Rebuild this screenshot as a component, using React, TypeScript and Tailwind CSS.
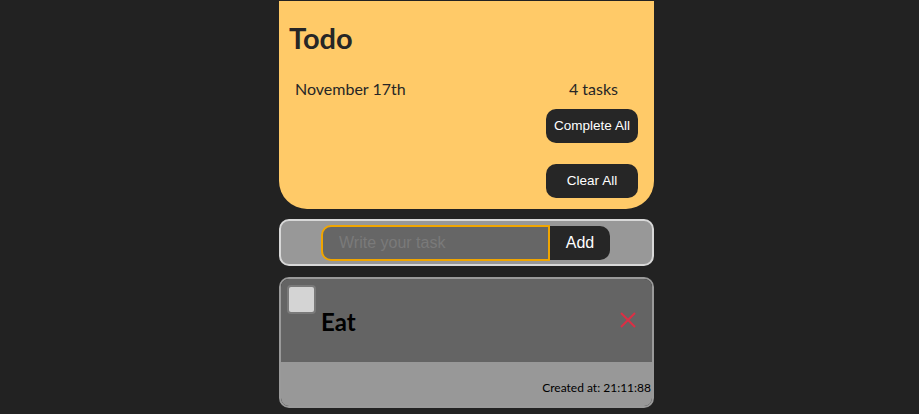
import React from "react";

const App = () => {
  return (
    <div className="min-h-screen bg-[#222222] flex justify-center pl-[14px] font-['Lato',sans-serif]">
      <div className="w-[375px] flex flex-col">
        <div className="mt-px h-[208px] bg-[#ffca68] rounded-b-[28px] pt-[22px] px-[10px] flex flex-col">
          <h1 className="text-[29px] leading-[30px] font-bold text-[#262626]">Todo</h1>
          <div className="flex justify-between items-center mt-[24px] pl-[6px] pr-[26px]">
            <span className="text-[16px] text-[#262626]">November 17th</span>
            <span className="text-[16px] text-[#262626]">4 tasks</span>
          </div>
          <div className="flex flex-col items-end gap-[21px] mt-[8px] pr-[6px]">
            <button className="w-[92px] h-[34px] rounded-[10px] bg-[#262626] text-white text-[13.5px] font-['Liberation_Sans',sans-serif]">
              Complete All
            </button>
            <button className="w-[92px] h-[34px] rounded-[10px] bg-[#262626] text-white text-[13.5px] font-['Liberation_Sans',sans-serif]">
              Clear All
            </button>
          </div>
        </div>

        <div className="mt-[10px] h-[47px] bg-[#989898] border-2 border-[#d8d8d8] rounded-[10px] flex items-center pl-[40px]">
          <input
            placeholder="Write your task"
            className="w-[229px] h-[36px] bg-[#666666] border-2 border-[#f0a500] rounded-l-[10px] px-[16px] text-[16px] text-white placeholder:text-[#7a7a7a] outline-none font-['Liberation_Sans',sans-serif]"
          />
          <button className="w-[60px] h-[34px] bg-[#262626] rounded-r-[10px] text-white text-[16px] font-['Liberation_Sans',sans-serif]">
            Add
          </button>
        </div>

        <div className="mt-[11px] h-[131px] border-2 border-[#9a9a9a] rounded-[10px] overflow-hidden flex flex-col">
          <div className="h-[83px] bg-[#646464] relative flex items-center justify-between pl-[40px] pr-[16px]">
            <div className="absolute left-[6px] top-[6px] w-[29px] h-[29px] bg-[#d4d4d4] border-2 border-[#7a7a7a] rounded-[4px]" />
            <span className="text-[24px] font-bold text-black mt-[3px]">Eat</span>
            <svg width="18" height="18" viewBox="0 0 18 18" className="-mt-[1px] mr-[-1px]">
              <path d="M2 2 L16 16 M16 2 L2 16" stroke="#dc2f45" strokeWidth="2" />
            </svg>
          </div>
          <div className="flex-1 bg-[#989898] flex items-end justify-end pb-[12px] pr-px">
            <span className="text-[12px] text-black leading-none">Created at: 21:11:88</span>
          </div>
        </div>
      </div>
    </div>
  );
};

export default App;
